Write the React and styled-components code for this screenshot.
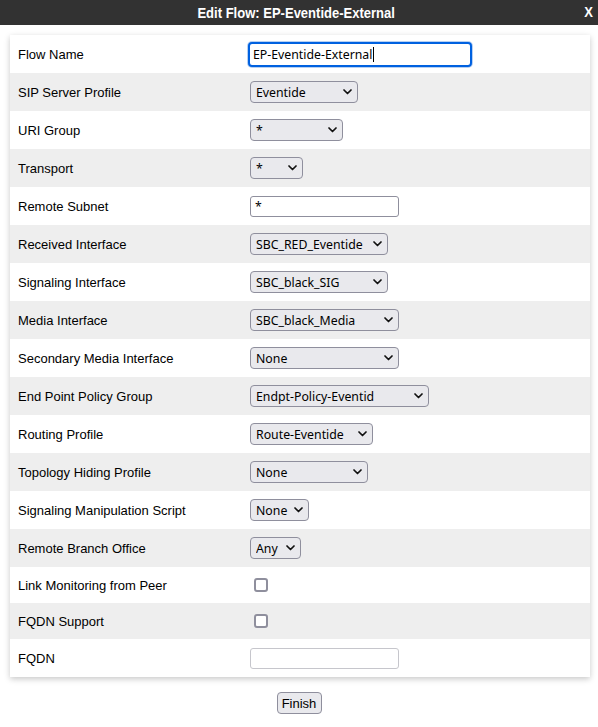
import React from "react";
import styled, { createGlobalStyle } from "styled-components";

const Global = createGlobalStyle`
  html, body { margin: 0; padding: 0; background: #fff; }
  body { font-family: "Liberation Sans", Arial, sans-serif; }
  * { box-sizing: border-box; }
`;

const Page = styled.div`
  width: 598px;
  min-height: 727px;
  background: #fff;
  display: flex;
  flex-direction: column;
`;

const TitleBar = styled.div`
  position: relative;
  height: 25px;
  background: #323232;
  color: #fff;
  display: flex;
  align-items: center;
  justify-content: center;
  font-family: "Liberation Sans", Arial, sans-serif;
  font-weight: bold;
  font-size: 14px;
`;

const TitleText = styled.span`
  display: inline-block;
  margin-right: 6px;
  transform: scaleX(0.93);
`;

const Close = styled.span`
  position: absolute;
  right: 5px;
  top: 0;
  height: 25px;
  line-height: 25px;
  font-size: 14px;
  font-weight: bold;
  transform: scaleX(0.93);
`;

const Panel = styled.div`
  margin: 10px 8px 0 10px;
  width: 580px;
  background: #fff;
  box-shadow: 0 2px 6px rgba(0, 0, 0, 0.22);
`;

const Row = styled.div`
  display: grid;
  grid-template-columns: 240px 1fr;
  align-items: center;
  height: ${(p) => p.$h || 38}px;
  background: ${(p) => (p.$alt ? "#eeeeee" : "#ffffff")};
`;

const Label = styled.div`
  padding-left: 8px;
  font-family: "Liberation Sans", Arial, sans-serif;
  font-size: 13px;
  color: #000;
`;

const Cell = styled.div`
  display: flex;
  align-items: center;
`;

const SelectWrap = styled.div`
  position: relative;
  display: inline-flex;
  width: ${(p) => p.$w}px;
  height: 22px;
`;

const Select = styled.select`
  appearance: none;
  -webkit-appearance: none;
  width: 100%;
  height: 22px;
  margin: 0;
  padding: 1px 20px 0 5px;
  border: 1px solid #8f8f9d;
  border-radius: 4px;
  background: #e9e9ed;
  color: #000;
  font-family: "Noto Sans", "Open Sans", sans-serif;
  font-size: 12.3px;
  outline: none;
`;

const Chevron = styled.svg`
  position: absolute;
  right: 6px;
  top: 8px;
  width: 9px;
  height: 6px;
  pointer-events: none;
`;

const TextInput = styled.input`
  width: ${(p) => p.$w}px;
  height: ${(p) => p.$hgt || 21}px;
  margin: 0;
  padding: 1px 4px 0;
  border: 1px solid ${(p) => (p.$light ? "#c6c6cc" : "#8f8f9d")};
  border-radius: 3px;
  background: #fff;
  color: #000;
  font-family: "Noto Sans", "Open Sans", sans-serif;
  font-size: 12.3px;
  outline: none;
`;

const FocusInput = styled(TextInput)`
  margin-left: -2px;
  width: 224px;
  height: 25px;
  border: 2px solid #0061e0;
  border-radius: 4px;
  box-shadow: 0 0 0 1px #b7d0f2;
  padding: 1px 3px 0;
`;

const Caret = styled.span`
  position: absolute;
  left: 123px;
  top: 5px;
  width: 1px;
  height: 15px;
  background: #000;
`;

const FocusWrap = styled.div`
  position: relative;
  display: inline-flex;
`;

const Check = styled.span`
  display: inline-block;
  width: 14px;
  height: 14px;
  margin-left: 4px;
  border: 2px solid #8f8f9d;
  border-radius: 3px;
  background: #fff;
`;

const Footer = styled.div`
  display: flex;
  justify-content: center;
  padding-top: 15px;
  padding-right: 18px;
`;

const Button = styled.button`
  height: 22px;
  width: 45px;
  padding: 0;
  border: 1px solid #8f8f9d;
  border-radius: 4px;
  background: #e9e9ed;
  color: #000;
  font-family: "Liberation Sans", Arial, sans-serif;
  font-size: 13px;
  margin-left: 18px;
`;

const Sel = ({ w, value }) => (
  <SelectWrap $w={w}>
    <Select defaultValue={value}>
      <option>{value}</option>
    </Select>
    <Chevron viewBox="0 0 9 6">
      <path d="M1 1 L4.5 4.5 L8 1" fill="none" stroke="#111" strokeWidth="1.7" strokeLinecap="round" strokeLinejoin="round" />
    </Chevron>
  </SelectWrap>
);

const rows = [
  { label: "SIP Server Profile", sel: "Eventide", w: 108 },
  { label: "URI Group", sel: "*", w: 93 },
  { label: "Transport", sel: "*", w: 53 },
  { label: "Remote Subnet", input: "*", w: 149 },
  { label: "Received Interface", sel: "SBC_RED_Eventide", w: 138 },
  { label: "Signaling Interface", sel: "SBC_black_SIG", w: 138 },
  { label: "Media Interface", sel: "SBC_black_Media", w: 149 },
  { label: "Secondary Media Interface", sel: "None", w: 149 },
  { label: "End Point Policy Group", sel: "Endpt-Policy-Eventid", w: 179 },
  { label: "Routing Profile", sel: "Route-Eventide", w: 123 },
  { label: "Topology Hiding Profile", sel: "None", w: 118 },
  { label: "Signaling Manipulation Script", sel: "None", w: 59 },
  { label: "Remote Branch Office", sel: "Any", w: 51 },
];

export default function App() {
  return (
    <Page>
      <Global />
      <TitleBar>
        <TitleText>Edit Flow: EP-Eventide-External</TitleText>
        <Close>X</Close>
      </TitleBar>
      <Panel>
        <Row>
          <Label>Flow Name</Label>
          <Cell>
            <FocusWrap>
              <FocusInput $w={224} defaultValue="EP-Eventide-External" />
              <Caret />
            </FocusWrap>
          </Cell>
        </Row>
        {rows.map((r, i) => (
          <Row key={r.label} $alt={i % 2 === 0}>
            <Label>{r.label}</Label>
            <Cell>
              {r.sel !== undefined ? (
                <Sel w={r.w} value={r.sel} />
              ) : (
                <TextInput $w={r.w} defaultValue={r.input} />
              )}
            </Cell>
          </Row>
        ))}
        <Row $h={36}>
          <Label>Link Monitoring from Peer</Label>
          <Cell>
            <Check />
          </Cell>
        </Row>
        <Row $h={36} $alt>
          <Label>FQDN Support</Label>
          <Cell>
            <Check />
          </Cell>
        </Row>
        <Row>
          <Label>FQDN</Label>
          <Cell>
            <TextInput $w={149} $light disabled />
          </Cell>
        </Row>
      </Panel>
      <Footer>
        <Button>Finish</Button>
      </Footer>
    </Page>
  );
}
